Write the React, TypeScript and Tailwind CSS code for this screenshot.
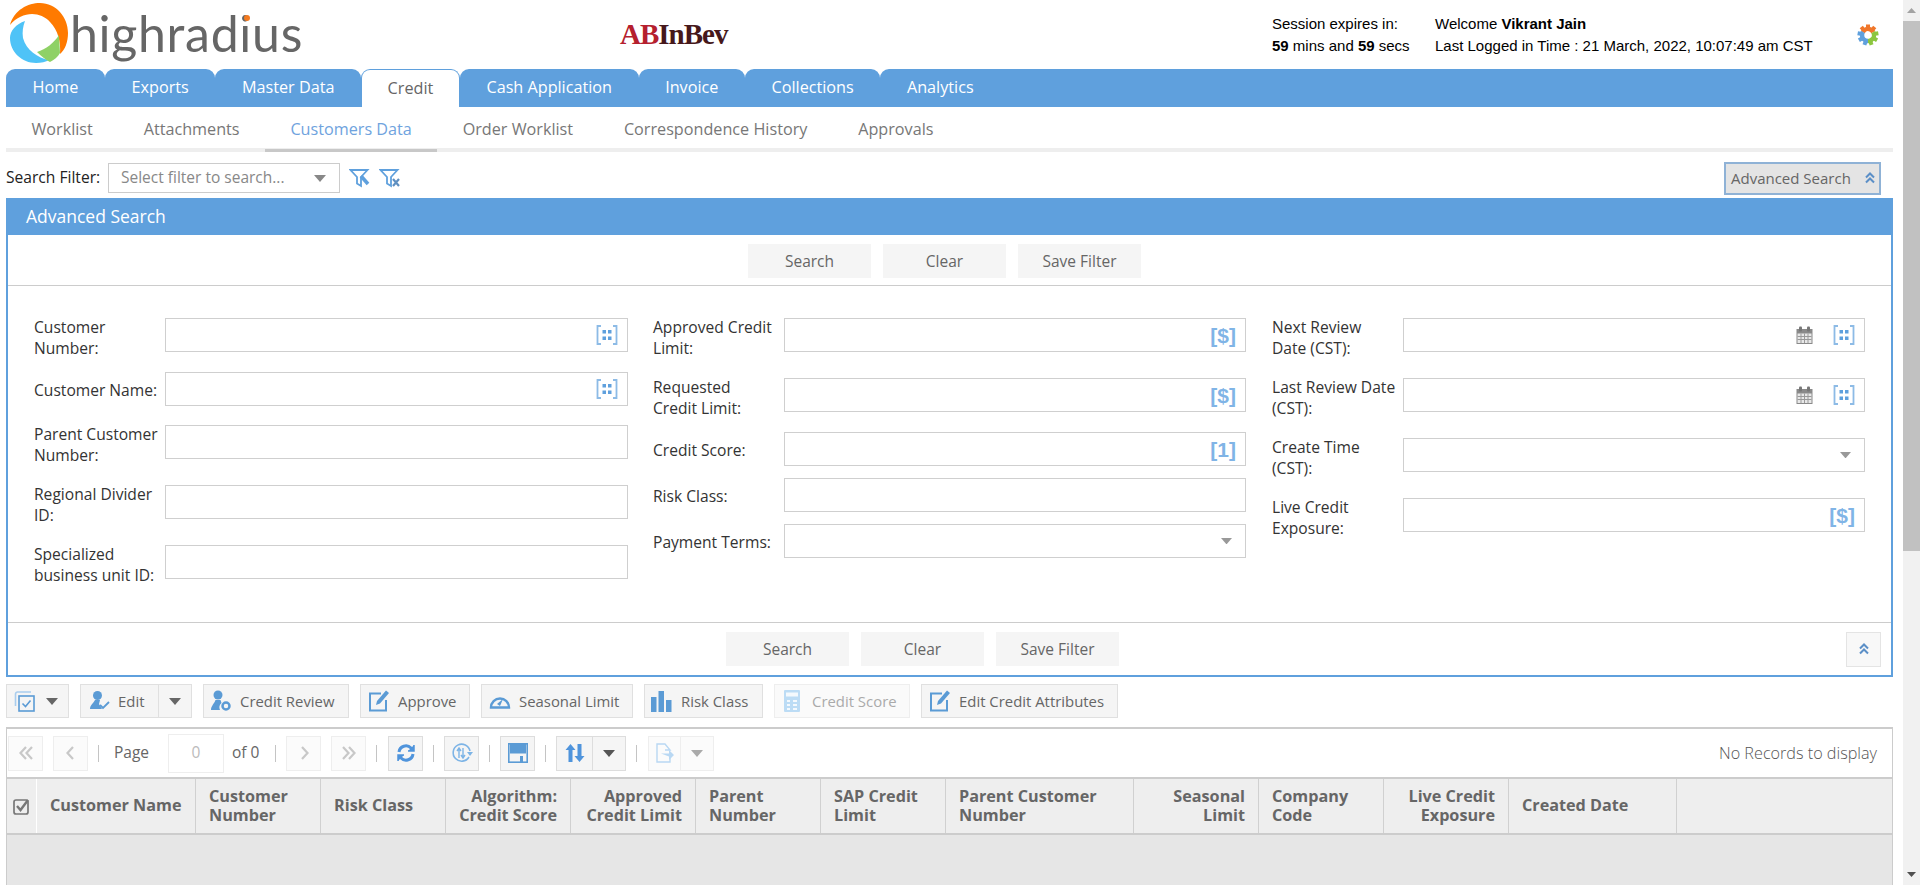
import React from "react";

const tabs = ["Home", "Exports", "Master Data", "Credit", "Cash Application", "Invoice", "Collections", "Analytics"];
const subTabs = ["Worklist", "Attachments", "Customers Data", "Order Worklist", "Correspondence History", "Approvals"];

function Caret({ color = "#666", w = 12 }: { color?: string; w?: number }) {
  return (
    <svg width={w} height={(w * 7) / 12} viewBox="0 0 12 7">
      <polygon points="0,0 12,0 6,7" fill={color} />
    </svg>
  );
}

function SwirlLogo() {
  return (
    <svg width="72" height="68" viewBox="0 0 72 68">
      <path d="M10 25C14 10 28 3 40 3C56 3 68 17 68 33C68 42 65 50 60 54C61 42 58 30 50 22C40 11 22 11 10 25Z" fill="#ff7a00" />
      <path d="M25 21C16 24 10 31 10 38C10 52 22 63 36 63C41 63 46 62 49 60C38 58 26 50 23 38C22 32 23 26 25 21Z" fill="#4fc3f7" />
      <path d="M59 35L60 53C58 57 54 60 50 62C46 60 41 56 37 52C46 49 54 43 59 35Z" fill="#8fd166" />
    </svg>
  );
}

function Gear() {
  const teeth = ["#f0772b", "#f0772b", "#f0772b", "#8cc63f", "#8cc63f", "#8cc63f", "#5fa0dd", "#5fa0dd", "#5fa0dd"];
  return (
    <svg width="22" height="22" viewBox="0 0 22 22" fill="none">
      <g transform="rotate(-150 11 11)">
        <circle cx="11" cy="11" r="6" stroke="#f0772b" strokeWidth="4.500" pathLength="100" strokeDasharray="34 66" />
      </g>
      <g transform="rotate(-30 11 11)">
        <circle cx="11" cy="11" r="6" stroke="#8cc63f" strokeWidth="4.500" pathLength="100" strokeDasharray="34 66" />
      </g>
      <g transform="rotate(90 11 11)">
        <circle cx="11" cy="11" r="6" stroke="#5fa0dd" strokeWidth="4.500" pathLength="100" strokeDasharray="34 66" />
      </g>
      {teeth.map((c, i) => (
        <rect key={i} x="9" y="0.500" width="4" height="4" fill={c} transform={`rotate(${-40 + i * 40} 11 11)`} />
      ))}
    </svg>
  );
}

function FilterEdit() {
  return (
    <svg width="22" height="22" viewBox="0 0 22 22" fill="none">
      <path d="M1.500 3h17l-6.500 7v9l-4-2.500V10z" stroke="#5fa0dd" strokeWidth="1.800" />
      <path d="M12 9l7 8" stroke="#5fa0dd" strokeWidth="3.500" />
    </svg>
  );
}

function FilterClear() {
  return (
    <svg width="22" height="22" viewBox="0 0 22 22" fill="none">
      <path d="M1.500 3h17l-6.500 7v9l-4-2.500V10z" stroke="#5fa0dd" strokeWidth="1.800" />
      <path d="M14 12l6 7M20 12l-6 7" stroke="#5f8fc0" strokeWidth="2.200" />
    </svg>
  );
}

function DoubleUp({ size = 12 }: { size?: number }) {
  return (
    <svg width={size} height={size} viewBox="0 0 12 12" fill="none" stroke="#5b8fc7" strokeWidth="2">
      <path d="M2 5.500L6 1.500l4 4M2 10.500l4-4 4 4" />
    </svg>
  );
}

function DotsIcon() {
  return (
    <svg width="22" height="20" viewBox="0 0 22 20" fill="none">
      <path d="M5 1H1.500v18H5M17 1h3.500v18H17" stroke="#8dbbe6" strokeWidth="1.800" />
      <rect x="6.500" y="5" width="3.500" height="3.500" fill="#5fa0dd" />
      <rect x="12" y="5" width="3.500" height="3.500" fill="#5fa0dd" />
      <rect x="6.500" y="11.500" width="3.500" height="3.500" fill="#5fa0dd" />
      <rect x="12" y="11.500" width="3.500" height="3.500" fill="#5fa0dd" />
    </svg>
  );
}

function CalendarIcon() {
  return (
    <svg width="17" height="18" viewBox="0 0 17 18">
      <rect x="0.500" y="3" width="16" height="15" fill="#8a8a8a" />
      <rect x="3" y="0.500" width="3" height="5" rx="1" fill="#777" />
      <rect x="11" y="0.500" width="3" height="5" rx="1" fill="#777" />
      <path d="M1.500 7.500h14v9.500h-14z" fill="#e8e8e8" />
      <path d="M1.500 10.500h14M1.500 13.500h14M5 7.500v9.500M8.500 7.500v9.500M12 7.500v9.500" stroke="#9a9a9a" strokeWidth="1" />
    </svg>
  );
}

function ValueMark({ text }: { text: string }) {
  return <span className="font-['Liberation_Sans',sans-serif] text-[21px] font-bold leading-none text-[#80b4e6]">{text}</span>;
}

function FieldCaret() {
  return (
    <span className="mr-[4px] flex">
      <Caret color="#999" w={11} />
    </span>
  );
}

function Field({ label, height, icons, single }: { label: React.ReactNode; height: string; icons?: React.ReactNode; single?: boolean }) {
  return (
    <div className={`flex items-start ${height}`}>
      <div className={`w-[131px] shrink-0 pr-1 text-[15.6px] leading-[21px] text-[#333] ${single ? "pt-[8px]" : "-mt-px"}`}>{label}</div>
      <div className="flex h-[34px] flex-1 items-center justify-end gap-[20px] border border-[#cfcfcf] bg-white pr-[9px]">{icons}</div>
    </div>
  );
}

function PanelButton({ children }: { children: React.ReactNode }) {
  return (
    <div className="flex h-[34px] w-[123px] items-center justify-center bg-[#f5f5f5] pt-[2px] text-[15.5px] text-[#666]">{children}</div>
  );
}

function ToolButton({ icon, label, disabled, className }: { icon: React.ReactNode; label: string; disabled?: boolean; className: string }) {
  return (
    <div
      className={`flex h-[34px] items-center border ${className} ${
        disabled ? "border-[#eeeeee] bg-[#fafafa] text-[#aaa]" : "border-[#e0e0e0] bg-[#f5f5f5] text-[#666]"
      } text-[14.9px]`}
    >
      {icon}
      <span>{label}</span>
    </div>
  );
}

function PersonCheck() {
  return (
    <svg width="22" height="22" viewBox="0 0 22 22">
      <circle cx="8.500" cy="5.500" r="4.500" fill="#5b9bd5" />
      <path d="M6 10h5l-1 4 3 5H1c0-4 3-5 5-9z" fill="#5b9bd5" />
      <path d="M11 15l3 3 6-6" fill="none" stroke="#5b9bd5" strokeWidth="1.800" />
    </svg>
  );
}

function PersonGear() {
  return (
    <svg width="22" height="22" viewBox="0 0 22 22">
      <circle cx="8" cy="5" r="4.500" fill="#5b9bd5" />
      <path d="M5.500 10h5l1 3a6 6 0 0 0-1.500 7H1c0-4 3-6 4.500-10z" fill="#5b9bd5" />
      <circle cx="16" cy="16" r="3.500" fill="none" stroke="#5b9bd5" strokeWidth="2.500" />
    </svg>
  );
}

function EditBox() {
  return (
    <svg width="22" height="22" viewBox="0 0 22 22">
      <path d="M13 3.500H2v17h16V10" fill="none" stroke="#5b9bd5" strokeWidth="2" />
      <path d="M18 0.500l3 2.500-9 10.500-4 1.500 1-4z" fill="#5b9bd5" />
    </svg>
  );
}

function Gauge() {
  return (
    <svg width="22" height="16" viewBox="0 0 22 16" fill="none">
      <path d="M2 14.500a9 9 0 1 1 18 0z" stroke="#5b9bd5" strokeWidth="2.400" />
      <path d="M8 11l6-5-3 7z" fill="#5b9bd5" />
    </svg>
  );
}

function Bars() {
  return (
    <svg width="21" height="21" viewBox="0 0 21 21" fill="#5b9bd5">
      <rect x="0" y="6" width="5.500" height="15" />
      <rect x="7.500" y="0" width="5.500" height="21" />
      <rect x="15" y="9" width="5.500" height="12" />
    </svg>
  );
}

function Calculator() {
  return (
    <svg width="16" height="22" viewBox="0 0 16 22">
      <rect width="16" height="22" rx="1" fill="#bcdcf5" />
      <rect x="2" y="2.500" width="12" height="4" fill="#f4f9fd" />
      <path d="M3 10h3v2H3zM9 10h4v2H9zM3 14h3v2H3zM9 14h4v2H9zM3 18h3v2H3zM9 18h4v2H9z" fill="#f4f9fd" />
    </svg>
  );
}

function CheckStack() {
  return (
    <svg width="21" height="21" viewBox="0 0 21 21" fill="none">
      <path d="M17 1H3.500A2 2 0 0 0 1.500 3v12" stroke="#a9cdee" strokeWidth="1.600" />
      <rect x="5" y="5" width="15" height="15" stroke="#5b9bd5" strokeWidth="1.600" />
      <path d="M8.500 12.500l3 3 5-6" stroke="#5b9bd5" strokeWidth="1.600" />
    </svg>
  );
}

function PageButton({ children, dim }: { children: React.ReactNode; dim?: boolean }) {
  return (
    <div
      className={`flex h-[35px] w-[35px] shrink-0 items-center justify-center border ${
        dim ? "border-[#eeeeee] bg-[#fbfbfb]" : "border-[#dddddd] bg-[#f5f5f5]"
      }`}
    >
      {children}
    </div>
  );
}

function Chevrons({ d }: { d: string }) {
  return (
    <svg width="18" height="18" viewBox="0 0 18 18" fill="none" stroke="#c8c8c8" strokeWidth="2.200">
      <path d={d} />
    </svg>
  );
}

function Sep({ className }: { className: string }) {
  return <div className={`h-[17px] w-px shrink-0 bg-[#c4c4c4] ${className}`} />;
}

const columns: { w: string; lines: string[]; right?: boolean }[] = [
  { w: "w-[159px]", lines: ["Customer Name"] },
  { w: "w-[125px]", lines: ["Customer", "Number"] },
  { w: "w-[125px]", lines: ["Risk Class"] },
  { w: "w-[125px]", lines: ["Algorithm:", "Credit Score"], right: true },
  { w: "w-[125px]", lines: ["Approved", "Credit Limit"], right: true },
  { w: "w-[125px]", lines: ["Parent", "Number"] },
  { w: "w-[125px]", lines: ["SAP Credit", "Limit"] },
  { w: "w-[188px]", lines: ["Parent Customer", "Number"] },
  { w: "w-[125px]", lines: ["Seasonal", "Limit"], right: true },
  { w: "w-[125px]", lines: ["Company", "Code"] },
  { w: "w-[125px]", lines: ["Live Credit", "Exposure"], right: true },
  { w: "w-[168px]", lines: ["Created Date"] },
];

export default function App() {
  const dots = <DotsIcon />;
  return (
    <div className="flex h-[885px] w-full overflow-hidden bg-white font-['Open_Sans',sans-serif]">
      <div className="min-w-0 flex-1 pl-[6px] pr-[10px]">
        {/* top header */}
        <div className="-ml-[6px] -mr-[10px] flex h-[69px] items-start">
          <div className="relative flex w-[620px] shrink-0 items-start">
            <SwirlLogo />
            <span className="-ml-[2px] mt-[5px] font-['Lato',sans-serif] text-[50px] leading-[56px] tracking-[0.7px] text-[#666]">highradius</span>
            <span className="absolute left-[244px] top-[15px] h-[6px] w-[6px] rounded-full bg-[#f47b20]" />
          </div>
          <div className="mt-[18px] flex w-[652px] font-['Liberation_Serif',serif] text-[29px] font-bold leading-[32px] tracking-[-1px]">
            <span className="text-[#b5202e]">AB</span>
            <span className="text-[#46181b]">InBev</span>
          </div>
          <div className="mt-[13px] w-[163px] font-['Liberation_Sans',sans-serif] text-[15px] leading-[22px] text-black">
            <div>Session expires in:</div>
            <div className="whitespace-nowrap">
              <b>59</b> mins and <b>59</b> secs
            </div>
          </div>
          <div className="mt-[13px] w-[422px] font-['Liberation_Sans',sans-serif] text-[15px] leading-[22px] text-black">
            <div>
              Welcome <b>Vikrant Jain</b>
            </div>
            <div className="whitespace-nowrap">Last Logged in Time : 21 March, 2022, 10:07:49 am CST</div>
          </div>
          <div className="mt-[24px]">
            <Gear />
          </div>
        </div>

        {/* main tabs */}
        <div className="flex h-[38px]">
          {tabs.map((t, i) => (
            <div
              key={t}
              className={
                t === "Credit"
                  ? "flex items-center rounded-t-[9px] border border-b-0 border-[#5fa0dd] px-[25.6px] pb-[1px] text-[16.2px] text-[#666]"
                  : i === tabs.length - 1
                    ? "flex items-center rounded-tl-[9px] bg-[#5fa0dd] px-[26.6px] pb-[1px] text-[16.2px] text-white"
                    : "flex items-center rounded-t-[9px] bg-[#5fa0dd] px-[26.6px] pb-[1px] text-[16.2px] text-white"
              }
            >
              {t}
            </div>
          ))}
          <div className="flex-1 bg-[#5fa0dd]" />
        </div>

        {/* sub tabs */}
        <div className="flex h-[45px] border-b-[4px] border-[#eeeeee]">
          {subTabs.map((t) => (
            <div
              key={t}
              className={
                t === "Customers Data"
                  ? "-mb-[4px] flex items-center border-b-[3px] border-[#c8c8c8] px-[25.4px] pt-[3px] text-[16.2px] text-[#6fa3de]"
                  : "flex items-center px-[25.4px] pt-[3px] text-[16.2px] text-[#777]"
              }
            >
              {t}
            </div>
          ))}
        </div>

        {/* search filter row */}
        <div className="flex h-[46px] items-center pt-[6px]">
          <span className="w-[102px] text-[15.6px] text-[#222]">Search Filter:</span>
          <div className="flex h-[30px] w-[232px] items-center justify-between border border-[#cccccc] pl-[12px] pr-[13px] text-[15.5px] text-[#888]">
            <span>Select filter to search...</span>
            <Caret color="#888" />
          </div>
          <div className="ml-[9px] flex gap-[8px]">
            <FilterEdit />
            <FilterClear />
          </div>
          <div className="ml-auto mr-[12px] flex h-[33px] w-[157px] items-center justify-between border-2 border-[#8fb2d6] bg-[#e4e4e4] pl-[5px] pr-[3px] text-[15px] text-[#666]">
            <span>Advanced Search</span>
            <DoubleUp />
          </div>
        </div>

        {/* advanced search panel */}
        <div className="h-[479px] border-2 border-t-0 border-[#5fa0dd]">
          <div className="-mx-[2px] flex h-[37px] items-center bg-[#5fa0dd] pl-[20px] text-[17.5px] text-white">Advanced Search</div>
          <div className="flex h-[51px] items-center gap-[12px] border-b border-[#cccccc] pl-[740px] pt-[1px]">
            <PanelButton>Search</PanelButton>
            <PanelButton>Clear</PanelButton>
            <PanelButton>Save Filter</PanelButton>
          </div>
          <div className="flex h-[337px] items-start gap-[25px] border-b border-[#cccccc] pl-[26px] pr-[26px] pt-[32px]">
            <div className="w-[594px] shrink-0">
              <Field label="Customer Number:" height="h-[54px]" icons={dots} />
              <Field label="Customer Name:" height="h-[53px]" icons={dots} single />
              <Field label="Parent Customer Number:" height="h-[60px]" />
              <Field label="Regional Divider ID:" height="h-[60px]" />
              <Field label="Specialized business unit ID:" height="h-[60px]" />
            </div>
            <div className="w-[593px] shrink-0">
              <Field label="Approved Credit Limit:" height="h-[60px]" icons={<ValueMark text="[$]" />} />
              <Field label={<>Requested<br />Credit Limit:</>} height="h-[54px]" icons={<ValueMark text="[$]" />} />
              <Field label="Credit Score:" height="h-[46px]" icons={<ValueMark text="[1]" />} single />
              <Field label="Risk Class:" height="h-[46px]" single />
              <Field label="Payment Terms:" height="h-[46px]" icons={<FieldCaret />} single />
            </div>
            <div className="ml-px min-w-0 flex-1">
              <Field label="Next Review Date (CST):" height="h-[60px]" icons={<><CalendarIcon />{dots}</>} />
              <Field label="Last Review Date (CST):" height="h-[60px]" icons={<><CalendarIcon />{dots}</>} />
              <Field label="Create Time (CST):" height="h-[60px]" icons={<FieldCaret />} />
              <Field label="Live Credit Exposure:" height="h-[60px]" icons={<ValueMark text="[$]" />} />
            </div>
          </div>
          <div className="flex h-[52px] items-center gap-[12px] pl-[718px] pr-[10px]">
            <PanelButton>Search</PanelButton>
            <PanelButton>Clear</PanelButton>
            <PanelButton>Save Filter</PanelButton>
            <div className="ml-auto flex h-[35px] w-[35px] items-center justify-center border border-[#e4e4e4] bg-[#f8f8f8]">
              <DoubleUp />
            </div>
          </div>
        </div>

        {/* action toolbar */}
        <div className="mt-[7px] flex h-[34px] items-center gap-[11px]">
          <div className="flex h-[34px] w-[63px] items-center gap-[11px] border border-[#e0e0e0] bg-[#f5f5f5] pl-[7px]">
            <CheckStack />
            <Caret />
          </div>
          <div className="flex h-[34px] w-[112px] items-center border border-[#e0e0e0] bg-[#f5f5f5] text-[14.9px] text-[#666]">
            <div className="flex h-full w-[78px] items-center gap-[7px] border-r border-[#e0e0e0] pl-[8px]">
              <PersonCheck />
              <span>Edit</span>
            </div>
            <div className="flex flex-1 justify-center">
              <Caret />
            </div>
          </div>
          <ToolButton className="w-[146px] gap-[8px] pl-[6px]" icon={<PersonGear />} label="Credit Review" />
          <ToolButton className="w-[110px] gap-[8px] pl-[7px]" icon={<EditBox />} label="Approve" />
          <ToolButton className="w-[152px] gap-[8px] pl-[7px]" icon={<Gauge />} label="Seasonal Limit" />
          <ToolButton className="w-[119px] gap-[9px] pl-[6px]" icon={<Bars />} label="Risk Class" />
          <ToolButton className="w-[136px] gap-[12px] pl-[9px]" icon={<Calculator />} label="Credit Score" disabled />
          <ToolButton className="w-[197px] gap-[8px] pl-[7px]" icon={<EditBox />} label="Edit Credit Attributes" />
        </div>

        {/* grid */}
        <div className="mt-[9px] flex h-[158px] flex-col border-x border-t-2 border-[#cccccc]">
          <div className="flex h-[48px] shrink-0 items-center pl-[1px] text-[15.5px] text-[#666]">
            <PageButton dim><Chevrons d="M9 3L3.500 9 9 15M15 3L9.500 9 15 15" /></PageButton>
            <div className="w-[10px]" />
            <PageButton dim><Chevrons d="M11 3L5.500 9 11 15" /></PageButton>
            <Sep className="ml-[10px]" />
            <span className="ml-[15px] w-[54px]">Page</span>
            <div className="flex h-[39px] w-[56px] items-center justify-center border border-[#eeeeee] text-[#bbb]">0</div>
            <span className="ml-[8px] w-[27px] whitespace-nowrap">of 0</span>
            <Sep className="ml-[16px]" />
            <div className="w-[10px]" />
            <PageButton dim><Chevrons d="M7 3l5.500 6L7 15" /></PageButton>
            <div className="w-[10px]" />
            <PageButton dim><Chevrons d="M3 3l5.500 6L3 15M9 3l5.500 6L9 15" /></PageButton>
            <Sep className="ml-[10px] mr-[11px]" />
            <PageButton>
              <svg width="20" height="20" viewBox="0 0 20 20" fill="none" stroke="#4f94dc" strokeWidth="3">
                <path d="M3 9a7 7 0 0 1 12-4l2 2M17 11a7 7 0 0 1-12 4l-2-2" />
                <path d="M18 2v6h-6M2 18v-6h6" strokeWidth="1.500" fill="#4f94dc" />
              </svg>
            </PageButton>
            <Sep className="ml-[10px] mr-[10px]" />
            <PageButton>
              <svg width="22" height="22" viewBox="0 0 22 22" fill="none" stroke="#7db4e6" strokeWidth="1.600">
                <path d="M18 15a8.500 8.500 0 1 1 1-6" />
                <path d="M8 7v9M6 9l2-3 2 3M12 6v9M10 13l2 3 2-3" strokeWidth="1.400" />
                <path d="M16 10h6l-3 4z" fill="#7db4e6" stroke="none" />
              </svg>
            </PageButton>
            <Sep className="ml-[10px] mr-[10px]" />
            <PageButton>
              <svg width="20" height="20" viewBox="0 0 20 20">
                <rect x="0.800" y="0.800" width="18.400" height="18.400" fill="none" stroke="#5b9bd5" strokeWidth="1.600" />
                <rect x="2" y="1" width="16" height="9.500" fill="#5b9bd5" />
                <rect x="12" y="13" width="3" height="6" fill="#5b9bd5" />
              </svg>
            </PageButton>
            <Sep className="ml-[10px] mr-[10px]" />
            <div className="flex h-[35px] w-[70px] shrink-0 items-center border border-[#dddddd] bg-[#f5f5f5]">
              <div className="flex h-full w-[36px] items-center justify-center border-r border-[#dddddd]">
                <svg width="20" height="20" viewBox="0 0 20 20" fill="#4f94dc">
                  <path d="M5.500 1L0.500 7h3v12h4V7h3zM14.500 19l5-6h-3V1h-4v12h-3z" />
                </svg>
              </div>
              <div className="flex flex-1 justify-center">
                <Caret color="#555" />
              </div>
            </div>
            <Sep className="ml-[10px] mr-[11px]" />
            <div className="flex h-[35px] w-[66px] shrink-0 items-center border border-[#eeeeee] bg-[#fbfbfb]">
              <div className="flex h-full w-[32px] items-center justify-center border-r border-[#eeeeee]">
                <svg width="20" height="20" viewBox="0 0 20 20" fill="none" stroke="#b9d8f3" strokeWidth="1.400">
                  <path d="M10 7H15L10 1H2v18h13v-5" />
                  <path d="M6 10.500h8V7l5 5-5 5v-3.500" fill="#b9d8f3" stroke="none" />
                </svg>
              </div>
              <div className="flex flex-1 justify-center">
                <Caret color="#aaa" />
              </div>
            </div>
            <span className="ml-auto pr-[15px] text-[16.2px] font-light text-[#555]">No Records to display</span>
          </div>
          <div className="flex h-[58px] shrink-0 border-y-2 border-[#cccccc] bg-[#eeeeee] text-[16.2px] font-bold leading-[19.5px] text-[#666]">
            <div className="flex w-[30px] shrink-0 items-center justify-center border-r border-white">
              <svg width="17" height="17" viewBox="0 0 17 17" fill="none">
                <rect x="1" y="2" width="14" height="14" rx="2" stroke="#777" strokeWidth="1.700" />
                <path d="M4 8l3.500 4L15 2" stroke="#777" strokeWidth="2.400" />
              </svg>
            </div>
            {columns.map((c) => (
              <div
                key={c.lines.join(" ")}
                className={`flex shrink-0 flex-col justify-center border-r border-[#d0d0d0] px-[13px] ${c.w} ${c.right ? "items-end text-right" : "items-start"}`}
              >
                {c.lines.map((l) => (
                  <span key={l} className="whitespace-nowrap">{l}</span>
                ))}
              </div>
            ))}
          </div>
          <div className="flex-1 bg-[#e6e6e6]" />
        </div>
      </div>

      {/* page scrollbar */}
      <div className="flex w-[17px] shrink-0 flex-col items-center bg-[#f1f1f1]">
        <div className="flex h-[21px] items-center">
          <svg width="9" height="5" viewBox="0 0 9 5"><polygon points="4.500,0 9,5 0,5" fill="#a3a3a3" /></svg>
        </div>
        <div className="h-[530px] w-full bg-[#c1c1c1]" />
        <div className="mt-auto flex h-[21px] items-center">
          <svg width="9" height="5" viewBox="0 0 9 5"><polygon points="0,0 9,0 4.500,5" fill="#505050" /></svg>
        </div>
      </div>
    </div>
  );
}
